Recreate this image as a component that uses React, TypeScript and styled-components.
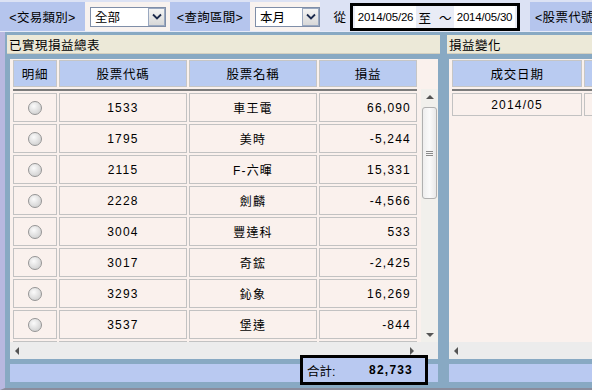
import styled, { createGlobalStyle } from 'styled-components'

const GlobalStyle = createGlobalStyle`
  html, body {
    margin: 0;
    padding: 0;
    background: #b8b8e0;
  }
  body {
    font-family: "Liberation Sans", "Noto Sans CJK TC", sans-serif;
    font-size: 12px;
    color: #000;
  }
`

const Page = styled.div`
  width: 592px;
  height: 390px;
  display: flex;
  flex-direction: column;
  overflow: hidden;
`

const TopBar = styled.div`
  height: 32px;
  box-sizing: border-box;
  padding-top: 2px;
  display: flex;
  background: #dce2f4;
  border-bottom: 1px solid #e6eaf8;
  white-space: nowrap;
`

const LabelCell = styled.div<{ $w: number; $start?: boolean }>`
  width: ${(p) => p.$w}px;
  flex: none;
  display: flex;
  align-items: center;
  justify-content: ${(p) => (p.$start ? 'flex-start' : 'center')};
  padding-left: ${(p) => (p.$start ? 5 : 0)}px;
  box-sizing: border-box;
  background: #b5c5ed;
  font-size: 12.5px;
  letter-spacing: 0.3px;
  overflow: hidden;
`

const SelectCell = styled.div<{ $w: number }>`
  width: ${(p) => p.$w}px;
  flex: none;
  display: flex;
  align-items: center;
  padding-left: 5px;
  box-sizing: border-box;
  background: #f8f2ef;
`

const SelectBox = styled.div<{ $w: number }>`
  width: ${(p) => p.$w}px;
  height: 20px;
  box-sizing: border-box;
  border: 1px solid #7f8ea8;
  background: #fff;
  display: flex;
  align-items: center;
  justify-content: space-between;
  padding-left: 4px;
  font-size: 12.5px;
`

const DropButton = styled.div`
  width: 17px;
  height: 18px;
  box-sizing: border-box;
  border: 1px solid #9aa8c0;
  background: linear-gradient(#f4f4f4, #d8d8d8);
  display: flex;
  align-items: center;
  justify-content: center;
`

const FromCell = styled.div`
  flex: none;
  width: 30px;
  display: flex;
  align-items: center;
  justify-content: flex-end;
  padding-right: 4px;
  box-sizing: border-box;
  font-size: 12.5px;
`

const DateBox = styled.div`
  flex: none;
  width: 170px;
  height: 28px;
  margin-top: 1px;
  box-sizing: border-box;
  border: 3px solid #000;
  background: #e9ecf6;
  display: flex;
  align-items: center;
  padding: 0 2px;
`

const DateInput = styled.div`
  width: 61px;
  height: 22px;
  flex: none;
  background: #fff;
  display: flex;
  align-items: center;
  justify-content: center;
  font-size: 11.5px;
  letter-spacing: -0.2px;
`

const DateSep = styled.div`
  flex: 1;
  display: flex;
  justify-content: center;
  gap: 8px;
  font-size: 12.5px;
`

const Spacer = styled.div<{ $w: number }>`
  width: ${(p) => p.$w}px;
  flex: none;
`

const Main = styled.div`
  flex: 1;
  display: flex;
  background: #88a9c3;
  border-left: 5px solid #b8b8e0;
  border-bottom: 2px solid #8a8c9c;
  padding-top: 3px;
  padding-bottom: 5px;
  min-height: 0;
`

const Panel = styled.div<{ $w: number; $pl: number }>`
  width: ${(p) => p.$w}px;
  flex: none;
  display: flex;
  flex-direction: column;
  padding-left: ${(p) => p.$pl}px;
  box-sizing: border-box;
`

const PanelTitle = styled.div<{ $mr: number }>`
  height: 19px;
  margin-right: ${(p) => p.$mr}px;
  box-sizing: border-box;
  background: #ece9d8;
  border-bottom: 1px solid #d4d0c0;
  display: flex;
  align-items: center;
  padding-left: 2px;
  font-size: 12.5px;
  letter-spacing: 0.5px;
`

const Body = styled.div<{ $ml: number; $mr: number }>`
  margin: 5px ${(p) => p.$mr}px 0 ${(p) => p.$ml}px;
  height: 300px;
  display: grid;
  grid-template-columns: minmax(0, 1fr) auto;
  grid-template-rows: 1fr 17px;
  background: #faf1ed;
  overflow: hidden;
`

const TableArea = styled.div`
  overflow: hidden;
  padding: 0 0 0 1px;
`

const Table = styled.table<{ $w?: number }>`
  border-collapse: separate;
  border-spacing: 2px 2px;
  table-layout: fixed;
  margin-top: -1px;
  ${(p) => (p.$w ? `width: ${p.$w}px;` : '')}
`

const Th = styled.th<{ $w: number }>`
  width: ${(p) => p.$w}px;
  height: 25px;
  padding: 0;
  background: #b9cbf1;
  border: 1px solid #c6c6c6;
  font-weight: normal;
  font-size: 12.5px;
  letter-spacing: 0.8px;
`

const HeadRule = styled.tr`
  & > td {
    height: 0;
    padding: 0;
    border-top: 2px solid #7c7c7c;
  }
`

const Td = styled.td<{ $align?: string; $h: number }>`
  height: ${(p) => p.$h}px;
  padding: 0 5px;
  border: 1px solid #c2c2c2;
  text-align: ${(p) => p.$align ?? 'center'};
  font-size: 12px;
  letter-spacing: 1.2px;
  white-space: nowrap;
`

const Radio = styled.span`
  display: inline-block;
  width: 12px;
  height: 12px;
  border-radius: 50%;
  border: 1px solid #959595;
  background: radial-gradient(circle at 40% 35%, #fbfbfb, #d6d6d6 70%);
  vertical-align: middle;
`

const VScroll = styled.div`
  width: 17px;
  margin-top: 30px;
  background: #f1f0ec;
  display: flex;
  flex-direction: column;
  align-items: center;
  padding: 5px 0 4px;
  box-sizing: border-box;
`

const Thumb = styled.div`
  width: 15px;
  height: 92px;
  margin-top: 7px;
  margin-bottom: auto;
  box-sizing: border-box;
  border: 1px solid #b0b0b0;
  border-radius: 3px;
  background: linear-gradient(90deg, #eeeeee, #fafafa 50%, #e8e8e8);
  display: flex;
  align-items: center;
  justify-content: center;
`

const HScroll = styled.div<{ $pr: number }>`
  grid-column: 1 / -1;
  background: #ececec;
  display: flex;
  align-items: center;
  justify-content: space-between;
  padding: 0 ${(p) => p.$pr}px 0 4px;
`

const TotalBar = styled.div<{ $ml: number; $mr: number }>`
  margin: 5px ${(p) => p.$mr}px 0 ${(p) => p.$ml}px;
  height: 18px;
  background: #b9c9f1;
  position: relative;
`

const TotalBox = styled.div`
  position: absolute;
  left: 290px;
  top: -9px;
  width: 128px;
  height: 30px;
  box-sizing: border-box;
  border: 3px solid #000;
  background: #b9c9f1;
  display: flex;
  align-items: center;
  justify-content: space-between;
  padding: 0 12px 0 4px;
  font-size: 12.5px;
`

const TotalValue = styled.span`
  font-weight: bold;
  letter-spacing: 1.2px;
  font-size: 12px;
`

const Arrow = ({ dir }: { dir: 'up' | 'down' | 'left' | 'right' }) => {
  const pts = {
    up: '0,5 4,1 8,5',
    down: '0,1 4,5 8,1',
    left: '5,0 1,4 5,8',
    right: '1,0 5,4 1,8',
  }[dir]
  const vertical = dir === 'up' || dir === 'down'
  return (
    <svg width={vertical ? 8 : 6} height={vertical ? 6 : 8} viewBox={vertical ? '0 0 8 6' : '0 0 6 8'}>
      <polygon points={pts} fill="#555" />
    </svg>
  )
}

const Chevron = () => (
  <svg width="10" height="7" viewBox="0 0 10 7">
    <polyline points="1,1.5 5,5.5 9,1.5" fill="none" stroke="#1c2a4c" strokeWidth="1.8" />
  </svg>
)

const rows = [
  { code: '1533', name: '車王電', pl: '66,090' },
  { code: '1795', name: '美時', pl: '-5,244' },
  { code: '2115', name: 'F-六暉', pl: '15,331' },
  { code: '2228', name: '劍麟', pl: '-4,566' },
  { code: '3004', name: '豐達科', pl: '533' },
  { code: '3017', name: '奇鋐', pl: '-2,425' },
  { code: '3293', name: '鈊象', pl: '16,269' },
  { code: '3537', name: '堡達', pl: '-844' },
]

export default function App() {
  return (
    <Page>
      <GlobalStyle />
      <TopBar>
        <LabelCell $w={85}>&lt;交易類別&gt;</LabelCell>
        <SelectCell $w={85}>
          <SelectBox $w={76}>
            全部
            <DropButton>
              <Chevron />
            </DropButton>
          </SelectBox>
        </SelectCell>
        <LabelCell $w={80}>&lt;查詢區間&gt;</LabelCell>
        <SelectCell $w={70}>
          <SelectBox $w={65}>
            本月
            <DropButton>
              <Chevron />
            </DropButton>
          </SelectBox>
        </SelectCell>
        <FromCell>從</FromCell>
        <DateBox>
          <DateInput>2014/05/26</DateInput>
          <DateSep>
            <span>至</span>
            <span>～</span>
          </DateSep>
          <DateInput>2014/05/30</DateInput>
        </DateBox>
        <Spacer $w={10} />
        <LabelCell $w={62} $start>
          &lt;股票代號
        </LabelCell>
      </TopBar>
      <Main>
        <Panel $w={438} $pl={2}>
          <PanelTitle $mr={3}>已實現損益總表</PanelTitle>
          <Body $ml={3} $mr={5}>
            <TableArea>
              <Table>
                <thead>
                  <tr>
                    <Th $w={42}>明細</Th>
                    <Th $w={126}>股票代碼</Th>
                    <Th $w={126}>股票名稱</Th>
                    <Th $w={96}>損益</Th>
                  </tr>
                </thead>
                <tbody>
                  <HeadRule>
                    <td colSpan={4} />
                  </HeadRule>
                  {rows.map((r) => (
                    <tr key={r.code}>
                      <Td $h={27}>
                        <Radio />
                      </Td>
                      <Td $h={27}>{r.code}</Td>
                      <Td $h={27}>{r.name}</Td>
                      <Td $h={27} $align="right">
                        {r.pl}
                      </Td>
                    </tr>
                  ))}
                  <tr>
                    <Td $h={27} />
                    <Td $h={27} />
                    <Td $h={27} />
                    <Td $h={27} />
                  </tr>
                </tbody>
              </Table>
            </TableArea>
            <VScroll>
              <Arrow dir="up" />
              <Thumb>
                <svg width="7" height="5" viewBox="0 0 7 5">
                  <path d="M0 0.5H7M0 2.5H7M0 4.5H7" stroke="#8a8a8a" strokeWidth="1" />
                </svg>
              </Thumb>
              <Arrow dir="down" />
            </VScroll>
            <HScroll $pr={23}>
              <Arrow dir="left" />
              <Arrow dir="right" />
            </HScroll>
          </Body>
          <TotalBar $ml={3} $mr={5}>
            <TotalBox>
              <span>合計:</span>
              <TotalValue>82,733</TotalValue>
            </TotalBox>
          </TotalBar>
        </Panel>
        <Panel $w={149} $pl={4}>
          <PanelTitle $mr={0}>損益變化</PanelTitle>
          <Body $ml={2} $mr={0}>
            <TableArea>
              <Table $w={240}>
                <thead>
                  <tr>
                    <Th $w={126}>成交日期</Th>
                    <Th $w={100} />
                  </tr>
                </thead>
                <tbody>
                  <HeadRule>
                    <td colSpan={2} />
                  </HeadRule>
                  <tr>
                    <Td $h={21}>2014/05</Td>
                    <Td $h={21} />
                  </tr>
                </tbody>
              </Table>
            </TableArea>
            <div />
            <HScroll $pr={0}>
              <Arrow dir="left" />
            </HScroll>
          </Body>
          <TotalBar $ml={2} $mr={0} />
        </Panel>
      </Main>
    </Page>
  )
}
